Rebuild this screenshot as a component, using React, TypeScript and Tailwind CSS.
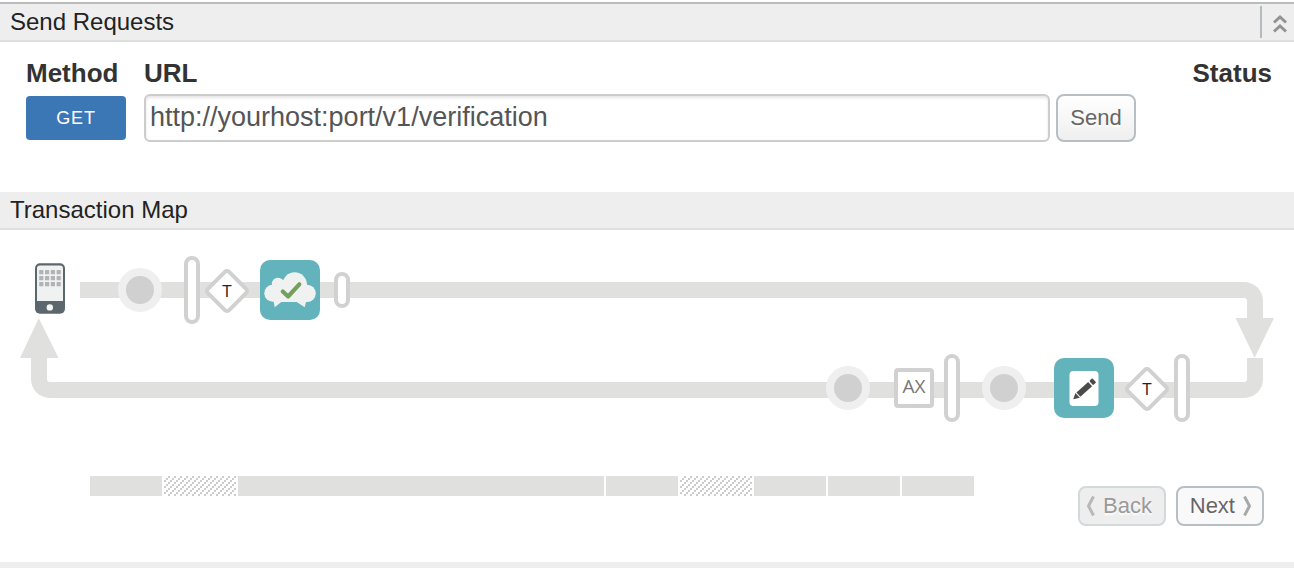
import type { ReactNode } from "react";

const CIRCLE = "absolute size-11 rounded-full border-8 border-[#efefef] bg-[#d0d0d0]";
const PILL = "absolute w-4 rounded-full border-4 border-[#d1d1d1] bg-white";
const TILE = "absolute size-[60px] rounded-[10px] bg-[#62b3bc]";
const BUTTON =
  "flex h-10 w-[88px] items-center rounded-lg border-2 text-[22px] leading-6 [text-shadow:0_2px_2px_white]";

function SectionHeader({ title, children }: { title: string; children?: ReactNode }) {
  return (
    <header className="flex h-[38px] items-center justify-between border-b-2 border-[#dfdfdf] bg-[#eeeeee] pl-[10px]">
      <h2 className="text-2xl leading-9 text-[#222222]">{title}</h2>
      {children}
    </header>
  );
}

function Diamond({ className }: { className: string }) {
  return (
    <div className={`absolute flex size-[34px] items-center justify-center ${className}`}>
      <div className="absolute inset-0 rotate-45 rounded-[5px] border-4 border-[#d1d1d1] bg-white" />
      <span className="relative font-[Open_Sans,Noto_Sans,sans-serif] text-[17px] leading-5 text-[#222222]">T</span>
    </div>
  );
}

function Phone() {
  return (
    <svg className="absolute left-[35px] top-[33px]" width="30" height="51" viewBox="0 0 30 51" aria-hidden="true">
      <rect width="30" height="50.5" y="0.3" rx="5" fill="#5c666d" />
      <path d="M2 38V5.500a3 3 0 0 1 3-3h20a3 3 0 0 1 3 3V38z" fill="#f0f1f1" />
      {[7, 13, 19].map((y) =>
        [4.2, 10, 15.8, 21.6].map((x) => (
          <rect key={`${x}-${y}`} x={x} y={y} width="4.2" height="4.2" rx="0.5" fill="#b0b4b6" />
        )),
      )}
      <circle cx="14.8" cy="44.4" r="3.2" fill="#f5f5f5" />
    </svg>
  );
}

function CloudCheck() {
  return (
    <svg width="60" height="60" viewBox="0 0 60 60" aria-hidden="true">
      <g fill="#f0f2f2">
        <circle cx="12.8" cy="33.3" r="8.5" />
        <circle cx="18" cy="24" r="6.2" />
        <circle cx="34.7" cy="24.6" r="12.3" />
        <circle cx="47.2" cy="33.3" r="8.6" />
        <path d="M12.8 26 18 20h16l13 8v13.9H46l-1.3 5.3-8-5.3H21.3l-6.6 5.3-1-5.3z" />
      </g>
      <path
        d="m22.8 31.5 5.3 5L39.3 24.3"
        fill="none"
        stroke="#75a05b"
        strokeWidth="4.2"
        strokeLinecap="round"
        strokeLinejoin="round"
      />
    </svg>
  );
}

function PencilPage() {
  return (
    <svg width="60" height="60" viewBox="0 0 60 60" aria-hidden="true">
      <rect x="15.5" y="13" width="29" height="35" rx="4" fill="#ffffff" />
      <g fill="#4a4a4c" transform="translate(19.2 41.3) rotate(-42)">
        <path d="M0 0 6-3.200v6.400z" />
        <rect x="7" y="-2.9" width="15.8" height="5.8" />
        <rect x="24.2" y="-2.9" width="4.2" height="5.8" rx="1" />
      </g>
    </svg>
  );
}

function TransactionMap() {
  return (
    <div className="relative h-[196px]">
      <div className="absolute left-20 right-[31px] top-[52px] h-9 rounded-tr-[19px] border-r-16 border-t-16 border-[#e0e0de]" />
      <div className="absolute left-[31px] right-[31px] top-32 h-10 rounded-b-[19px] border-x-16 border-b-16 border-[#e0e0de]" />
      <svg className="absolute right-5 top-[88px]" width="39" height="40" viewBox="0 0 39 40" aria-hidden="true">
        <path d="M0.500 0H39L19.700 39.700z" fill="#e0e0de" />
      </svg>
      <svg className="absolute left-5 top-[88px]" width="39" height="40" viewBox="0 0 39 40" aria-hidden="true">
        <path d="M0 40H38.500L18.800 0.300z" fill="#e0e0de" />
      </svg>

      <Phone />
      <div className={`${CIRCLE} left-[118px] top-[38px]`} />
      <div className={`${PILL} left-[184px] top-[26px] h-[68px]`} />
      <Diamond className="left-[210px] top-11" />
      <div className={`${TILE} left-[260px] top-[30px]`}>
        <CloudCheck />
      </div>
      <div className={`${PILL} left-[334px] top-[42px] h-9`} />

      <div className={`${CIRCLE} right-[424px] top-[136px]`} />
      <div className="absolute right-[360px] top-[138px] flex size-10 items-center justify-center rounded border-4 border-[#d1d1d1] bg-white pb-1 font-[Open_Sans,Noto_Sans,sans-serif] text-[19px] leading-6 text-[#777777]">
        AX
      </div>
      <div className={`${PILL} right-[334px] top-[124px] h-[68px]`} />
      <div className={`${CIRCLE} right-[268px] top-[136px]`} />
      <div className={`${TILE} right-[180px] top-32`}>
        <PencilPage />
      </div>
      <Diamond className="right-[130px] top-[142px]" />
      <div className={`${PILL} right-[104px] top-[124px] h-[68px]`} />
    </div>
  );
}

function Hatch() {
  return (
    <svg className="h-5 w-0 grow-72" aria-hidden="true">
      <defs>
        <pattern id="hatch" width="6" height="6" patternUnits="userSpaceOnUse" shapeRendering="crispEdges">
          <path d="M4 0h2v2H4zM2 2h2v2H2zM0 4h2v2H0z" fill="#cccccc" />
        </pattern>
      </defs>
      <rect width="100%" height="100%" fill="url(#hatch)" />
    </svg>
  );
}

function Timeline() {
  const step = "h-5 w-0 grow-72 bg-[#e0e0de]";
  return (
    <div className="flex flex-1 gap-[2px]">
      <div className={step} />
      <Hatch />
      <div className="h-5 w-0 grow-366 bg-[#e0e0de]" />
      <div className={step} />
      <Hatch />
      <div className={step} />
      <div className={step} />
      <div className={step} />
    </div>
  );
}

export default function App() {
  return (
    <main className="border-b-[6px] border-[#eeeeee] bg-white pt-[2px] font-['Liberation_Sans',Arial,sans-serif]">
      <section className="border-t-2 border-[#bbbbbb]">
        <SectionHeader title="Send Requests">
          <button type="button" aria-label="Collapse" className="flex h-8 w-[34px] items-center justify-center border-l-2 border-[#b4bbbf] pl-1 pt-1">
            <svg width="16" height="20" viewBox="0 0 16 20" fill="none" stroke="#929292" strokeWidth="3" aria-hidden="true">
              <path d="m2 8.500 6-5.500 6 5.500M2 17.500 8 12l6 5.500" />
            </svg>
          </button>
        </SectionHeader>
        <form className="flex items-start pb-[50px] pl-[26px] pr-[22px] pt-4 text-[#333333]" onSubmit={(e) => e.preventDefault()}>
          <div className="mr-[18px] w-[100px]">
            <div className="text-[26px] font-bold leading-[30px]">Method</div>
            <div className="mt-2 flex h-11 items-center justify-center rounded bg-[#3b76b5] text-lg leading-6 tracking-wider text-white">
              GET
            </div>
          </div>
          <div className="mr-[6px] min-w-0 flex-1">
            <label htmlFor="url" className="block text-[26px] font-bold leading-[30px]">
              URL
            </label>
            <input
              id="url"
              type="text"
              defaultValue="http://yourhost:port/v1/verification"
              className="mt-[6px] block h-12 w-full rounded-md border-2 border-[#cccccc] bg-white px-1 pb-[2px] text-[27px] leading-8 text-[#555555] shadow-[inset_0_2px_3px_rgba(0,0,0,0.1)]"
            />
          </div>
          <button
            type="submit"
            className="mt-9 h-12 w-20 rounded-lg border-2 border-[#b7bfc4] bg-linear-to-b from-white to-[#efefef] text-[22px] leading-6 text-[#666666] [text-shadow:0_2px_2px_white]"
          >
            Send
          </button>
          <div className="w-[136px] text-right text-[26px] font-bold leading-[30px]">Status</div>
        </form>
      </section>

      <section>
        <SectionHeader title="Transaction Map" />
        <TransactionMap />
        <div className="flex items-start pb-9 pl-[90px] pr-[30px] pt-[50px]">
          <Timeline />
          <div className="ml-[104px] mt-[10px] flex gap-[10px]">
            <button type="button" disabled className={`${BUTTON} justify-start gap-2 border-[#d3d8db] bg-[#eeeeee] pl-[6px] text-[#9a9a9a]`}>
              <svg width="9" height="20" viewBox="0 0 9 20" fill="none" stroke="#b8b8b8" strokeWidth="3" aria-hidden="true">
                <path d="M7.500 0.500 2.500 10l5 9.500" />
              </svg>
              Back
            </button>
            <button type="button" className={`${BUTTON} justify-end gap-2 border-[#b7bfc4] bg-[#f9f9f9] pr-[10px] text-[#666666]`}>
              Next
              <svg width="9" height="20" viewBox="0 0 9 20" fill="none" stroke="#a8a8a8" strokeWidth="3" aria-hidden="true">
                <path d="m1.500 0.500 5 9.500-5 9.500" />
              </svg>
            </button>
          </div>
        </div>
      </section>
    </main>
  );
}
